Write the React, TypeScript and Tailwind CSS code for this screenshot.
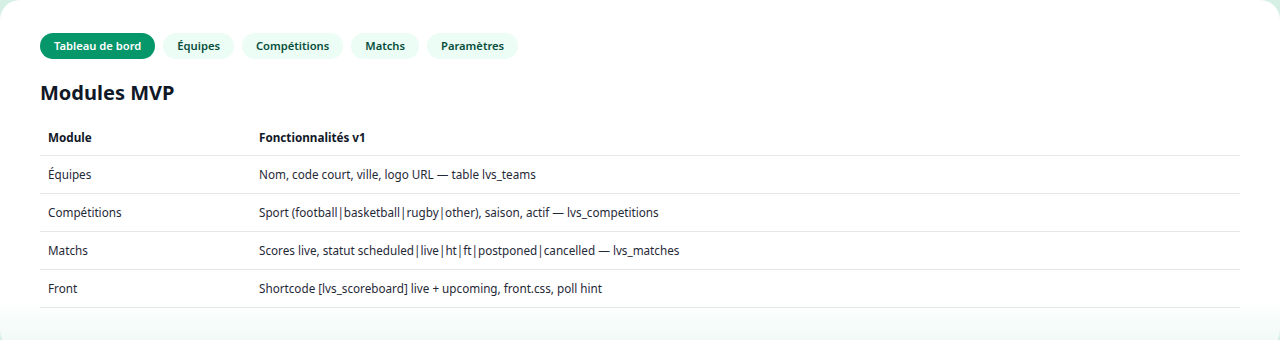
const tabs = ["Tableau de bord", "Équipes", "Compétitions", "Matchs", "Paramètres"];

const rows = [
  ["Équipes", "Nom, code court, ville, logo URL — table lvs_teams"],
  ["Compétitions", "Sport (football|basketball|rugby|other), saison, actif — lvs_competitions"],
  ["Matchs", "Scores live, statut scheduled|live|ht|ft|postponed|cancelled — lvs_matches"],
  ["Front", "Shortcode [lvs_scoreboard] live + upcoming, front.css, poll hint"],
];

export default function App() {
  return (
    <div className="h-[340px] overflow-hidden bg-[#d6efe4]" style={{ fontFamily: '"Noto Sans", sans-serif' }}>
      <div className="h-[350px] rounded-[20px] bg-gradient-to-b from-white from-85% to-[#eef9f4] px-10 pt-[33px]">
        <div className="flex gap-2">
          {tabs.map((t, i) => (
            <div
              key={t}
              className={
                i === 0
                  ? "h-[26px] px-[14px] rounded-full bg-[#059669] text-white text-[11.2px] font-semibold flex items-center"
                  : "h-[26px] px-[14px] rounded-full bg-[#ecfdf5] text-[#064e3b] text-[11.2px] font-semibold flex items-center"
              }
            >
              {t}
            </div>
          ))}
        </div>
        <h2 className="mt-[20px] text-[20px] leading-[28px] font-bold text-[#111827]">Modules MVP</h2>
        <table className="mt-[11px] w-full border-collapse text-[11.7px] text-[#1f2937]">
          <thead>
            <tr className="border-b border-[#e5e7eb]">
              <th className="w-[211px] h-[37px] pl-2 pt-[3px] text-left font-bold text-[#111827]">Module</th>
              <th className="h-[37px] pl-2 pt-[3px] text-left font-bold text-[#111827]">Fonctionnalités v1</th>
            </tr>
          </thead>
          <tbody>
            {rows.map(([m, f]) => (
              <tr key={m} className="border-b border-[#e5e7eb]">
                <td className="h-[38px] pl-2 pt-[2px]">{m}</td>
                <td className="h-[38px] pl-2 pt-[2px]">{f}</td>
              </tr>
            ))}
          </tbody>
        </table>
      </div>
    </div>
  );
}
